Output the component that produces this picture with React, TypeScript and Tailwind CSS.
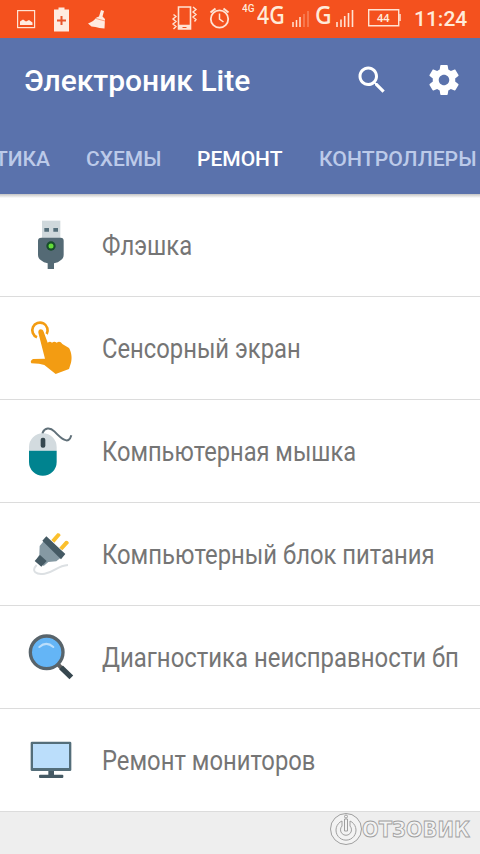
import type { ReactNode } from 'react'

const statusText = 'absolute origin-left whitespace-nowrap text-[#ffebd9]'

const StatusBar = () => {
    return (
        <div className="relative h-[38px] bg-[#f4511e]">
            <svg className="absolute inset-0" width="480" height="38" viewBox="0 0 480 38" fill="none" stroke="#ffe3d3">
                <rect x="17.6" y="10.6" width="17" height="17" strokeWidth="1.2" />
                <path d="M20 25v-3.500l3-2 3 2 3-1.500 3.500 2.500v2.500z" fill="#ffebe0" stroke="none" />
                <path d="M58.500 7.500h6v2h4.500v22H54v-22h4.500z" fill="#ffebe0" stroke="none" />
                <path d="M61.500 16v9M57 20.500h9" stroke="#e8552c" strokeWidth="2" />
                <path d="M101 10l3 1-1.500 5.500 2.500 2.500-.5 9.500-5-.5-4-1-4-.5-3.500-3c4-1.500 6.500-3.500 8.500-6l2.500-1z" fill="#ffebe0" stroke="none" />
                <path d="M96 18.500l9 2.500" stroke="#f4511e" strokeWidth=".5" />
                <path d="M178.500 7h12v22h-12zM178.500 25.500h12" strokeWidth="1.600" />
                <path d="M179 26h11v3h-11z" fill="#ffe3d3" stroke="none" />
                <path d="M182.500 27.500h4" stroke="#f4511e" />
                <path d="M193 7l3 2.500-3 2.500 3 2.500-3 2.500 3 2.500-1.500 2M173.500 14.500l2.500 2-3 2.500 3 2.500-3 2.500 3 2.500-2.500 2.500" strokeWidth="1.400" />
                <circle cx="219.500" cy="19" r="8.700" strokeWidth="1.800" />
                <path d="M219.500 13.500V19l4 3" strokeWidth="1.500" />
                <path d="M210.500 12.500l5-4M228.500 12.500l-5-4" strokeWidth="2" />
                <path d="M293 22v5M296.500 20v7M300 17v10" strokeWidth="1.500" />
                <path d="M304 14v13M308 11v16" strokeWidth="1.300" opacity=".4" />
                <path d="M337 22v5M341 19.500v7.500M344.700 16v11M348.500 13v14M352.500 10v17" strokeWidth="1.600" />
                <path d="M368.700 9.700h30v16h-30z" strokeWidth="1.400" />
                <path d="M400 14v7" strokeWidth="1.500" />
            </svg>
            <span className={`${statusText} left-[242px] top-[1px] font-[Roboto] text-[11px] leading-[16px] font-medium scale-x-[0.9]`}>4G</span>
            <span className={`${statusText} left-[257px] top-[-4px] font-['Noto_Sans'] text-[26px] leading-[36px] font-medium scale-x-[0.82]`}>4G</span>
            <span className={`${statusText} left-[315px] top-[-4px] font-['Noto_Sans'] text-[26px] leading-[36px] font-medium scale-x-[0.88]`}>G</span>
            <span className={`${statusText} left-[377px] top-[9px] font-['Noto_Sans'] text-[11px] leading-[17px] font-semibold`}>44</span>
            <span className={`${statusText} left-[414px] top-[7px] font-[Roboto] text-[21px] leading-[25px] font-medium`}>11:24</span>
        </div>
    )
}

const Header = () => {
    return (
        <header className="relative h-[156px] overflow-hidden bg-[#5a72ac] text-white">
            <div className="flex h-[84px] items-center pl-6">
                <h1 className="origin-left whitespace-nowrap font-[Roboto] text-[30px] font-medium">Электроник Lite</h1>
                <svg className="absolute left-[354px] top-[24px]" width="36" height="36" viewBox="0 0 24 24" fill="white">
                    <path d="M15.500 14h-.790l-.280-.270C15.410 12.590 16 11.110 16 9.500 16 5.910 13.090 3 9.500 3S3 5.910 3 9.500 5.910 16 9.500 16c1.610 0 3.090-.590 4.230-1.570l.270.280v.790l5 4.990L20.490 19l-4.990-5zm-6 0C7.010 14 5 11.990 5 9.500S7.010 5 9.500 5 14 7.010 14 9.500 11.990 14 9.500 14z" />
                </svg>
                <svg className="absolute left-[426px] top-[24px]" width="36" height="36" viewBox="0 0 24 24" fill="white">
                    <path d="M19.430 12.980c.040-.320.070-.640.070-.980s-.030-.660-.070-.980l2.110-1.650c.190-.150.240-.420.120-.640l-2-3.460c-.120-.220-.390-.300-.610-.220l-2.490 1c-.520-.400-1.080-.730-1.690-.980l-.380-2.650C14.460 2.180 14.250 2 14 2h-4c-.250 0-.460.180-.490.420l-.380 2.650c-.610.250-1.170.590-1.690.980l-2.490-1c-.230-.090-.490 0-.610.220l-2 3.460c-.130.220-.070.490.120.640l2.110 1.650c-.040.320-.070.650-.070.980s.030.660.070.980l-2.110 1.650c-.190.150-.240.420-.120.640l2 3.460c.120.220.390.300.610.220l2.490-1c.520.400 1.080.730 1.690.980l.380 2.650c.030.240.240.420.490.420h4c.250 0 .460-.180.490-.420l.380-2.650c.610-.250 1.170-.590 1.690-.980l2.490 1c.230.090.490 0 .610-.220l2-3.460c.120-.220.070-.490-.120-.640l-2.110-1.650zM12 15.500c-1.930 0-3.500-1.570-3.500-3.500s1.570-3.500 3.500-3.500 3.500 1.570 3.500 3.500-1.570 3.500-3.500 3.500z" />
                </svg>
            </div>
            <nav className="flex h-[72px] items-center gap-9 whitespace-nowrap pt-[3px] font-[Roboto] text-[21px] font-medium text-[#bccae9]">
                <span className="flex w-[50px] justify-end">ТИКА</span>
                <span className="w-[75px]">СХЕМЫ</span>
                <span className="w-[86px] text-white">РЕМОНТ</span>
                <span className="w-[160px] origin-left scale-x-[1.01]">КОНТРОЛЛЕРЫ</span>
            </nav>
        </header>
    )
}

const FlashIcon = () => (
    <svg width="90" height="80" viewBox="0 0 270 240">
        <path d="M96 47h55v55H96z" fill="#cfd8dc" />
        <path d="M103 69h14v11h-14zM130 69h14v11h-14z" fill="#546e7a" />
        <path d="M94 98h58q9 0 9 9v42q0 11-9 17-7 7-20 9v17h-19v-17q-12-2-20-9-9-6-9-17v-42q0-9 10-9z" fill="#546a75" />
        <circle cx="123" cy="123" r="14" fill="#174d2b" />
        <circle cx="123" cy="123" r="7.500" fill="#64dd3a" />
    </svg>
)

const TouchIcon = () => (
    <svg width="90" height="80" viewBox="0 -6 270 240">
        <path d="M81 82A23 23 0 1 1 110 72" fill="none" stroke="#f39c12" strokeWidth="8" />
        <path d="M85 68c-1-12 12-14 16-3l12 33q7-6 13 0 7-6 14 0 10-7 17 4l20 12c7 12 10 29 6 44l-6 19-40 15-34-27-16-4-23-1q-5-8 5-13l36-1z" fill="#f39c12" />
    </svg>
)

const MouseIcon = () => (
    <svg width="90" height="80" viewBox="0 -12 270 240">
        <path d="M98 60V53C104 38 120 36 133 49C152 69 176 92 184 61" fill="none" stroke="#607079" strokeWidth="6" />
        <path d="M57 107V96a41 41 0 0 1 83 0v11z" fill="#d3dbdf" />
        <path d="M57 107h83v34a41 41 0 0 1-83 0z" fill="#00838f" />
        <rect x="92" y="68" width="14" height="30" rx="6" fill="#37474f" />
    </svg>
)

const PlugIcon = () => (
    <svg width="90" height="80" viewBox="0 -3 270 240">
        <path d="M80 150c-19 20 0 30 24 26 30-4 37-24 70-26" fill="none" stroke="#dce0e3" strokeWidth="6" />
        <path d="M124 75l18-20q8-2 10 6l-19 22zM148 98l18-20q8-2 11 6l-20 22z" fill="#fbc02d" />
        <path d="M102 77l54 48-17 14-24 2-14 12-21-20 8-14 1-26z" fill="#8599a3" />
        <path d="M97 77l12-13 57 53-13 16zM74 138l16-18 20 18-16 17z" fill="#455a64" />
    </svg>
)

const MagnifierIcon = () => (
    <svg width="90" height="80" viewBox="0 -9 270 240">
        <path d="M143 132l19 20" stroke="#616161" strokeWidth="12" />
        <path d="M153 142l31 30" stroke="#37474f" strokeWidth="16" />
        <circle cx="110" cy="97" r="49" fill="#64b5f6" stroke="#58646b" strokeWidth="10" />
        <path d="M88 81q21-19 42 0" fill="none" stroke="#bbdefb" strokeWidth="6" strokeLinecap="round" />
    </svg>
)

const MonitorIcon = () => (
    <svg width="90" height="80" viewBox="0 -15 270 240">
        <path d="M115 134h17v19h-17z" fill="#455a64" />
        <rect x="62" y="50" width="122" height="88" rx="4" fill="#546e7a" />
        <path d="M69 57h108v72H69z" fill="#bbdefb" />
        <rect x="87" y="149" width="73" height="10" rx="3" fill="#455a64" />
    </svg>
)

const items: { label: string; icon: ReactNode; scale: string }[] = [
    { label: 'Флэшка', icon: <FlashIcon />, scale: 'scale-x-[0.883]' },
    { label: 'Сенсорный экран', icon: <TouchIcon />, scale: 'scale-x-[0.881]' },
    { label: 'Компьютерная мышка', icon: <MouseIcon />, scale: 'scale-x-[0.876]' },
    { label: 'Компьютерный блок питания', icon: <PlugIcon />, scale: 'scale-x-[0.883]' },
    { label: 'Диагностика неисправности бп', icon: <MagnifierIcon />, scale: 'scale-x-[0.886]' },
    { label: 'Ремонт мониторов', icon: <MonitorIcon />, scale: 'scale-x-[0.881]' },
]

const Watermark = () => (
    <svg className="absolute right-0 top-[-16px]" width="170" height="59" viewBox="0 0 170 59" fill="#f3f3f3" stroke="#9f9f9f">
        <circle cx="36" cy="33" r="15.500" />
        <path d="M32 25a10 10 0 1 0 8 0v5a5.500 5.500 0 1 1-8 0z" />
        <path d="M34.500 23h3v12h-3z" />
        <circle cx="36" cy="20.500" r="1.500" />
        <text x="52" y="40.500" textLength="108" lengthAdjust="spacingAndGlyphs" className="font-['DejaVu_Sans'] text-[21px] font-bold" strokeWidth=".9">
            ОТЗОВИК
        </text>
    </svg>
)

const App = () => {
    return (
        <div className="flex h-[854px] w-[480px] flex-col overflow-hidden bg-white">
            <StatusBar />
            <Header />
            <main className="bg-linear-to-b from-[#c4c4c4] to-white to-[4px]">
                {items.map((item) => (
                    <div key={item.label} className="flex h-[103px] border-b border-[#dcdcdc] pl-[10px]">
                        <div className="w-[92px] shrink-0 pt-[11px]">{item.icon}</div>
                        <span className={`w-[356px] origin-left self-center whitespace-nowrap pt-[3px] font-[Roboto] text-[27px] text-[#757575] ${item.scale}`}>
                            {item.label}
                        </span>
                    </div>
                ))}
            </main>
            <footer className="relative grow bg-[#eeeeee]">
                <Watermark />
            </footer>
        </div>
    )
}

export default App
